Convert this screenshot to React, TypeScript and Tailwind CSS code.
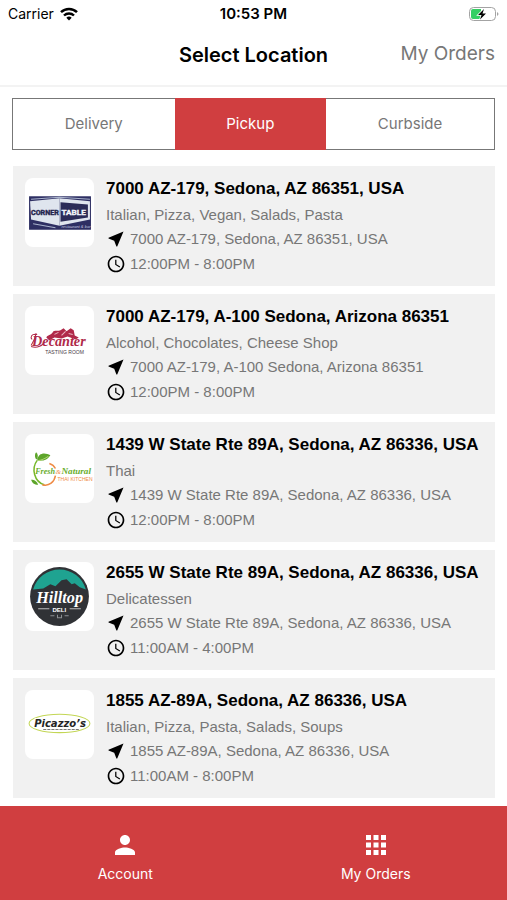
import { useState } from "react";
import type { ReactNode } from "react";
import { MdAccessTime, MdApps, MdNearMe, MdPerson } from "react-icons/md";

type Location = {
  id: string;
  title: string;
  tags: string;
  hours: string;
  logo: ReactNode;
};

const MODES = ["Delivery", "Pickup", "Curbside"];

function CornerTableLogo() {
  return (
    <svg viewBox="0 0 68 68" className="h-full w-full" role="img" aria-label="Corner Table">
      <rect x="4" y="18" width="61" height="33" fill="#2e2f63" />
      <path d="M5 23 34 20v27L6 41Z" fill="#dfe5ee" />
      <path d="M34 20 64 23v18L34 47Z" fill="#dfe5ee" />
      <path d="M35 24 62 26v13L35 43Z" fill="#2b2c58" />
      <path d="M6 21 34 19 64 21M8 45l22 4" fill="none" stroke="#a9b3cc" strokeWidth="1" />
      <text x="6" y="36" fontSize="7" fontWeight="700" fill="#23244d" stroke="#23244d" strokeWidth="0.4" fontFamily="Roboto, sans-serif">
        CORNER
      </text>
      <text x="36" y="36" fontSize="8" fontWeight="700" fill="#f2f5fa" stroke="#f2f5fa" strokeWidth="0.4" fontFamily="Roboto, sans-serif">
        TABLE
      </text>
      <text x="36" y="49" fontSize="4" fontStyle="italic" fill="#c9cde0" fontFamily="'Liberation Sans', sans-serif">
        restaurant &amp; bar
      </text>
    </svg>
  );
}

function DecanterLogo() {
  return (
    <svg viewBox="0 0 68 68" className="h-full w-full" role="img" aria-label="Decanter Tasting Room">
      <path d="M21 31c2-3 5-2 7-6 2-1 5 0 7-1l3-2 3 3 4-3 3 2 1 5 4 2-3 2-8-3-6 2-7-1-5 3Z" fill="#b02a4a" />
      <path d="M29 28l4-2M36 29l4-4M43 27l4 1" stroke="#e9b5c1" strokeWidth="1" />
      <path d="M12 28c-6-1-7 3-5 5M11 27c-1 5-3 9-5 12M6 40c6 2 12-1 13-5" fill="none" stroke="#b02a4a" strokeWidth="1" />
      <text x="7" y="39" fontSize="14" fontStyle="italic" fontWeight="700" fill="#b02a4a" fontFamily="'Liberation Serif', serif">
        Decanter
      </text>
      <text x="20" y="47" fontSize="5" fill="#4a4046" fontFamily="'Liberation Sans', sans-serif">
        TASTING ROOM
      </text>
    </svg>
  );
}

function FreshNaturalLogo() {
  return (
    <svg viewBox="0 0 68 68" className="h-full w-full" role="img" aria-label="Fresh and Natural Thai Kitchen">
      <path d="M12 26c-6 8-3 21 7 24" fill="none" stroke="#76b82a" strokeWidth="1.5" />
      <path d="M17 50c7 2 12-3 13-9M24 29c3 1 5 3 6 5" fill="none" stroke="#ef8b45" strokeWidth="1.5" />
      <path d="M12 26c1-8 8-8 13-5-3 5-8 6-13 5ZM11 25c-2-3-1-6 0-7 2 2 2 4 1 7ZM6 45c4 0 6 2 7 5-4 0-6-2-7-5Z" fill="#5da52a" />
      <path d="M13 26c4 0 7-2 10-4" fill="none" stroke="#b6d978" strokeWidth="1" />
      <text x="10" y="39" fontSize="8" fontStyle="italic" fontWeight="700" fill="#67ad2b" fontFamily="'Liberation Serif', serif">
        Fresh
      </text>
      <text x="30" y="39" fontSize="7" fontStyle="italic" fill="#ef8b45" fontFamily="'Liberation Serif', serif">
        &amp;
      </text>
      <text x="36" y="39" fontSize="9" fontStyle="italic" fontWeight="700" fill="#67ad2b" fontFamily="'Liberation Serif', serif">
        Natural
      </text>
      <text x="32" y="46" fontSize="5" fill="#ef8b45" fontFamily="'Liberation Sans', sans-serif">
        THAI KITCHEN
      </text>
    </svg>
  );
}

function HilltopLogo() {
  return (
    <svg viewBox="0 0 68 68" className="h-full w-full" role="img" aria-label="Hilltop Deli">
      <circle cx="34" cy="34" r="29" fill="#303236" />
      <path d="M8 27a27 27 0 0 1 52 0l-6-2-5-4-3 1-5-5-5 1-6 6-5-2-7 4Z" fill="#1fa391" />
      <text x="11" y="40" fontSize="16" fontStyle="italic" fontWeight="700" fill="#ffffff" fontFamily="'Liberation Serif', serif">
        Hilltop
      </text>
      <text x="27" y="49" fontSize="6" fontWeight="700" fill="#ffffff" fontFamily="'Liberation Sans', sans-serif">
        DELI
      </text>
      <path d="M13 46h11M44 46h11" stroke="#b9bbbd" strokeWidth="1" />
      <path d="M25 53h4M39 53h4M32 52v3h4v-3" fill="none" stroke="#8c8f92" strokeWidth="1" />
    </svg>
  );
}

function PicazzosLogo() {
  return (
    <svg viewBox="0 0 68 68" className="h-full w-full" role="img" aria-label="Picazzo's">
      <ellipse cx="34" cy="33" rx="30" ry="9" fill="none" stroke="#c3d655" strokeWidth="1" />
      <text x="9" y="36" fontSize="11" fontStyle="italic" fontWeight="700" fill="#252525" stroke="#ffffff" strokeWidth="2" paintOrder="stroke" fontFamily="'DejaVu Sans Condensed', sans-serif">
        Picazzo’s
      </text>
      <path d="M18 39h35" stroke="#777777" strokeWidth="1" strokeDasharray="3 1" />
    </svg>
  );
}

const LOCATIONS: Location[] = [
  {
    id: "corner-table",
    title: "7000 AZ-179, Sedona, AZ 86351, USA",
    tags: "Italian, Pizza, Vegan, Salads, Pasta",
    hours: "12:00PM - 8:00PM",
    logo: <CornerTableLogo />,
  },
  {
    id: "decanter",
    title: "7000 AZ-179, A-100 Sedona, Arizona 86351",
    tags: "Alcohol, Chocolates, Cheese Shop",
    hours: "12:00PM - 8:00PM",
    logo: <DecanterLogo />,
  },
  {
    id: "fresh-natural",
    title: "1439 W State Rte 89A, Sedona, AZ 86336, USA",
    tags: "Thai",
    hours: "12:00PM - 8:00PM",
    logo: <FreshNaturalLogo />,
  },
  {
    id: "hilltop",
    title: "2655 W State Rte 89A, Sedona, AZ 86336, USA",
    tags: "Delicatessen",
    hours: "11:00AM - 4:00PM",
    logo: <HilltopLogo />,
  },
  {
    id: "picazzos",
    title: "1855 AZ-89A, Sedona, AZ 86336, USA",
    tags: "Italian, Pizza, Pasta, Salads, Soups",
    hours: "11:00AM - 8:00PM",
    logo: <PicazzosLogo />,
  },
];

function StatusBar() {
  return (
    <div className="grid h-7 grid-cols-[1fr_auto_1fr] items-center px-2 text-sm">
      <div className="flex items-center gap-1.5">
        <span>Carrier</span>
        <svg viewBox="0 0 18 14" className="h-3.5 w-[18px]" aria-hidden="true">
          <path d="M1 5.200a11.500 11.500 0 0 1 16 0" fill="none" stroke="#000" strokeWidth="2.500" />
          <path d="M4 8.500a7.200 7.200 0 0 1 10 0" fill="none" stroke="#000" strokeWidth="2.400" />
          <path d="M9 13.500 6.300 10.800a3.900 3.900 0 0 1 5.400 0Z" />
        </svg>
      </div>
      <span className="text-[15px] font-semibold">10:53 PM</span>
      <svg viewBox="0 0 30 14" className="h-3.5 w-[30px] justify-self-end" aria-hidden="true">
        <rect x="0.500" y="0.500" width="26" height="13" rx="4" fill="#fff" stroke="#a3a3a3" />
        <path d="M4 2h8v10H4a2 2 0 0 1-2-2V4a2 2 0 0 1 2-2Z" fill="#35cf63" />
        <path d="M28 5v4c2-1 2-3 0-4Z" fill="#a3a3a3" />
        <path d="M15 2 9 8h3.500L11 12.500 17 6.500h-3.500Z" stroke="#fff" strokeWidth="1.500" paintOrder="stroke" />
      </svg>
    </div>
  );
}

function LocationCard({ location }: { location: Location }) {
  return (
    <li className="flex h-[120px] gap-3 bg-[#f1f1f1] p-3">
      <div className="size-[69px] shrink-0 overflow-hidden rounded-lg bg-white">{location.logo}</div>
      <div className="min-w-0 text-[15px] text-[#777777]">
        <h2 className="truncate text-[17px] leading-[22px] font-bold text-black">{location.title}</h2>
        <p className="mt-[3px] leading-6">{location.tags}</p>
        <p className="flex items-center gap-1 leading-6">
          <MdNearMe className="size-5 text-black" aria-hidden="true" />
          {location.title}
        </p>
        <p className="flex items-center gap-1 leading-[26px]">
          <MdAccessTime className="size-5 text-black" aria-hidden="true" />
          {location.hours}
        </p>
      </div>
    </li>
  );
}

export default function App() {
  const [mode, setMode] = useState("Pickup");

  return (
    <div className="flex min-h-screen flex-col bg-white font-['Liberation_Sans',sans-serif] text-black">
      <header className="border-b-2 border-[#f3f3f3] font-['Inter',sans-serif]">
        <StatusBar />
        <div className="grid h-[57px] grid-cols-[1fr_auto_1fr] items-center px-3 pb-1">
          <h1 className="col-start-2 text-xl font-semibold">Select Location</h1>
          <a href="#orders" className="justify-self-end text-[19px] text-[#777777]">
            My Orders
          </a>
        </div>
      </header>

      <main className="px-3 pt-[11px]">
        {/* Order mode */}
        <div className="flex h-[52px] border border-[#777777] font-['Inter',sans-serif] text-[15px]">
          {MODES.map((m) => (
            <button
              key={m}
              type="button"
              aria-pressed={m === mode}
              onClick={() => setMode(m)}
              className={m === mode ? "-my-px flex-auto bg-[#d03e40] text-white" : "flex-auto text-[#777777]"}
            >
              {m}
            </button>
          ))}
        </div>

        {/* Locations */}
        <ul className="mt-4 space-y-2 pl-px">
          {LOCATIONS.map((location) => (
            <LocationCard key={location.id} location={location} />
          ))}
        </ul>
      </main>

      {/* Bottom navigation */}
      <nav className="mt-2 flex flex-1 bg-[#d03e40] pt-6 pr-1.5 font-['Inter',sans-serif] text-sm text-white">
        <a href="#account" className="flex flex-1 flex-col items-center gap-1 pb-4">
          <MdPerson className="size-[30px]" aria-hidden="true" />
          Account
        </a>
        <a href="#orders" className="flex flex-1 flex-col items-center gap-1 pb-4">
          <MdApps className="size-[30px]" aria-hidden="true" />
          My Orders
        </a>
      </nav>
    </div>
  );
}
